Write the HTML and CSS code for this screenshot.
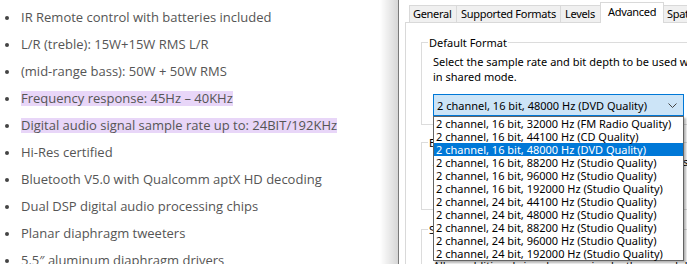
FILE: index.html
```html
<!DOCTYPE html>
<html lang="en">
<head>
    <meta charset="UTF-8">
    <meta name="viewport" content="width=device-width, initial-scale=1.0">
    <title>Speaker specs and sound format</title>
    <link rel="stylesheet" href="styles.css">
</head>
<body>
    <ul class="specs">
        <li><span>IR Remote control with batteries included</span></li>
        <li><span>L/R (treble): 15W+15W RMS L/R</span></li>
        <li><span>(mid-range bass): 50W + 50W RMS</span></li>
        <li><span class="mark">Frequency response: 45Hz – 40KHz</span></li>
        <li><span class="mark">Digital audio signal sample rate up to: 24BIT/192KHz</span></li>
        <li><span>Hi-Res certified</span></li>
        <li><span>Bluetooth V5.0 with Qualcomm aptX HD decoding</span></li>
        <li><span>Dual DSP digital audio processing chips</span></li>
        <li><span>Planar diaphragm tweeters</span></li>
        <li><span>5.5″ aluminum diaphragm drivers</span></li>
    </ul>

    <div class="shadow"></div>

    <div class="dialog">
        <div class="tabs">
            <div class="tab tab-general">General</div>
            <div class="tab tab-formats">Supported Formats</div>
            <div class="tab tab-levels">Levels</div>
            <div class="tab tab-advanced active">Advanced</div>
            <div class="tab tab-spatial">Spatial sound</div>
        </div>

        <div class="panel">
            <fieldset class="group group-format">
                <legend>Default Format</legend>
                <p class="hint">Select the sample rate and bit depth to be used when running<br>in shared mode.</p>
                <div class="combo">
                    <div class="combo-box">
                        <span>2 channel, 16 bit, 48000 Hz (DVD Quality)</span>
                        <svg class="chevron" width="9" height="5" viewBox="0 0 9 5">
                            <polyline points="0.5,0.5 4.5,4.5 8.5,0.5" fill="none" stroke="#444" stroke-width="1"/>
                        </svg>
                    </div>
                    <ul class="options">
                        <li>2 channel, 16 bit, 32000 Hz (FM Radio Quality)</li>
                        <li>2 channel, 16 bit, 44100 Hz (CD Quality)</li>
                        <li class="selected">2 channel, 16 bit, 48000 Hz (DVD Quality)</li>
                        <li>2 channel, 16 bit, 88200 Hz (Studio Quality)</li>
                        <li>2 channel, 16 bit, 96000 Hz (Studio Quality)</li>
                        <li>2 channel, 16 bit, 192000 Hz (Studio Quality)</li>
                        <li>2 channel, 24 bit, 44100 Hz (Studio Quality)</li>
                        <li>2 channel, 24 bit, 48000 Hz (Studio Quality)</li>
                        <li>2 channel, 24 bit, 88200 Hz (Studio Quality)</li>
                        <li>2 channel, 24 bit, 96000 Hz (Studio Quality)</li>
                        <li>2 channel, 24 bit, 192000 Hz (Studio Quality)</li>
                    </ul>
                </div>
            </fieldset>

            <fieldset class="group group-exclusive">
                <legend>Exclusive Mode</legend>
                <p class="hint">Allow applications to take exclusive control of this device</p>
            </fieldset>

            <fieldset class="group group-signal">
                <legend>Signal Enhancements</legend>
                <p class="hint under">Allow additional signal processing by the sound device</p>
            </fieldset>
        </div>
    </div>
</body>
</html>
```

FILE: styles.css
```css
body {
    margin: 0;
    display: flex;
    height: 264px;
    overflow: hidden;
    background: #fff;
}

/* left: product spec list */
.specs {
    width: 380px;
    flex: none;
    margin: 0;
    padding: 4px 0 0 0;
    list-style: none;
    font-family: "Open Sans", sans-serif;
    font-size: 13px;
    color: #555;
}
.specs li {
    display: flex;
    align-items: center;
    height: 27px;
    white-space: nowrap;
}
.specs li::before {
    content: "";
    width: 4px;
    height: 4px;
    border-radius: 50%;
    background: #444;
    margin: 0 12px 0 5px;
    flex: none;
}
.specs span {
    display: inline-block;
    height: 15px;
    line-height: 15px;
}
.mark {
    background: #e8d6f8;
}

/* window drop shadow */
.shadow {
    width: 18px;
    flex: none;
    background: linear-gradient(to right, rgba(0, 0, 0, 0), rgba(0, 0, 0, 0.16));
}

/* right: sound properties dialog */
.dialog {
    flex: 1;
    border-left: 1px solid #7a7a7a;
    padding-left: 6px;
    font-family: "Noto Sans", sans-serif;
    font-size: 11px;
    color: #000;
    overflow: hidden;
}
.tabs {
    display: flex;
    align-items: flex-end;
    height: 22px;
    padding-left: 4px;
}
.tab {
    box-sizing: border-box;
    height: 17px;
    line-height: 16px;
    margin-right: -1px;
    padding-left: 3px;
    background: #f0f0f0;
    border: 1px solid #d9d9d9;
    border-bottom: none;
    white-space: nowrap;
    letter-spacing: -0.3px;
    flex: none;
}
.tab-general { width: 48px; }
.tab-formats { width: 105px; padding-left: 4px; }
.tab-levels { width: 41px; padding-left: 4px; }
.tab-advanced { width: 64px; }
.tab-spatial { width: 80px; padding-left: 3px; }
.tab.active {
    position: relative;
    z-index: 1;
    height: 21px;
    margin-bottom: -1px;
    line-height: 17px;
    padding-left: 7px;
    background: #fff;
}
.panel {
    height: 300px;
    border-top: 1px solid #d9d9d9;
    border-left: 1px solid #d9d9d9;
    padding: 12px 0 0 15px;
}

.group {
    width: 300px;
    margin: 0;
    padding: 4px 0 0 11px;
    border: 1px solid #dcdcdc;
    border-right: none;
}
.group legend {
    margin-left: -5px;
    padding: 0 1px;
    line-height: 15px;
}
.hint {
    margin: 0;
    line-height: 15px;
    white-space: nowrap;
}
.hint.under {
    margin-top: 17px;
}
.group-format {
    height: 90px;
    box-sizing: border-box;
}
.group-exclusive {
    margin-top: 10px;
    height: 75px;
    box-sizing: border-box;
}
.group-signal {
    margin-top: 12px;
    height: 60px;
    box-sizing: border-box;
}

.combo {
    position: relative;
    width: 251px;
    margin-top: 10px;
}
.combo-box {
    box-sizing: border-box;
    height: 22px;
    display: flex;
    align-items: center;
    justify-content: space-between;
    padding: 0 4px 0 3px;
    background: #cce4f7;
    border: 1px solid #0078d7;
}
.chevron {
    margin-right: 2px;
}
.options {
    position: absolute;
    z-index: 2;
    top: 100%;
    left: 0;
    box-sizing: border-box;
    width: 251px;
    margin: 0;
    padding: 0;
    list-style: none;
    background: #fff;
    border: 1px solid #646464;
    box-shadow: 2px 2px 2px rgba(0, 0, 0, 0.3);
}
.options li {
    height: 13px;
    line-height: 13px;
    padding-left: 2px;
    white-space: nowrap;
}
.options li.selected {
    background: #0078d7;
    color: #fff;
}
```
